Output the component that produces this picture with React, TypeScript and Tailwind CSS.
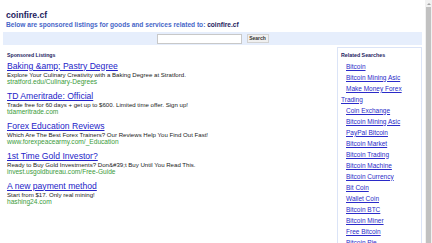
const ads = [
  {
    title: 'Baking &amp; Pastry Degree',
    text: 'Explore Your Culinary Creativity with a Baking Degree at Stratford.',
    url: 'stratford.edu/Culinary-Degrees',
  },
  {
    title: 'TD Ameritrade: Official',
    text: 'Trade free for 60 days + get up to $600. Limited time offer. Sign up!',
    url: 'tdameritrade.com',
  },
  {
    title: 'Forex Education Reviews',
    text: 'Which Are The Best Forex Trainers? Our Reviews Help You Find Out Fast!',
    url: 'www.forexpeacearmy.com/_Education',
  },
  {
    title: '1st Time Gold Investor?',
    text: 'Ready to Buy Gold Investments? Don&#39;t Buy Until You Read This.',
    url: 'invest.usgoldbureau.com/Free-Guide',
  },
  {
    title: 'A new payment method',
    text: 'Start from $17. Only real mining!',
    url: 'hashing24.com',
  },
];

const related = [
  'Bitcoin',
  'Bitcoin Mining Asic',
  'Make Money Forex Trading',
  'Coin Exchange',
  'Bitcoin Mining Asic',
  'PayPal Bitcoin',
  'Bitcoin Market',
  'Bitcoin Trading',
  'Bitcoin Machine',
  'Bitcoin Currency',
  'Bit Coin',
  'Wallet Coin',
  'Bitcoin BTC',
  'Bitcoin Miner',
  'Free Bitcoin',
  'Bitcoin Pie',
];

export default function App() {
  return (
    <div className="flex h-[243px] bg-white font-['Liberation_Sans',Arial,sans-serif]">
      <div className="h-full min-w-0 flex-1 overflow-hidden px-[3px]">
        <div className="pl-[3px] pt-[10px]">
          <h1 className="text-[8.6px] font-bold leading-[11px] text-[#1c1c5e]">coinfire.cf</h1>
          <p className="text-[6.6px] font-bold leading-[8px] text-[#4766c8]">
            Below are sponsored listings for goods and services related to:{' '}
            <span className="text-[#1c1c5e]">coinfire.cf</span>
          </p>
        </div>

        <form className="mt-[3px] flex h-[13px] items-center justify-center gap-[5px] bg-[#e6eefc]">
          <input
            type="text"
            className="h-[10px] w-[85px] border border-[#c8c8c8] bg-white px-[2px] text-[6px] outline-none"
          />
          <button
            type="button"
            className="h-[9px] w-[22px] border border-[#d2d2d2] bg-[#f0f0f0] text-[5px] font-bold leading-[7px] text-[#333]"
          >
            Search
          </button>
        </form>

        <div className="flex items-start">
          <div className="min-w-0 flex-1 pl-[4px] pt-[7px]">
            <h2 className="text-[5.2px] font-bold leading-[6px] text-[#1c1c5e]">Sponsored Listings</h2>
            <div className="mt-[2.5px] flex flex-col">
              {ads.map((ad) => (
                <div key={ad.title} className="mb-[6px]">
                  <a href="#" className="block text-[8.6px] leading-[10px] text-[#2323c8] underline">
                    {ad.title}
                  </a>
                  <p className="text-[6.1px] leading-[7px] text-[#222]">{ad.text}</p>
                  <p className="text-[6.6px] leading-[7px] text-[#3a9b3a]">{ad.url}</p>
                </div>
              ))}
            </div>
          </div>

          <div className="mt-[2px] w-[85px] shrink-0 border border-[#dbe4f7] bg-white pb-[8px] pl-[3px] pr-[2px] pt-[1.5px]">
            <h3 className="text-[5.3px] font-bold leading-[11px] text-[#1c1c5e]">Related Searches</h3>
            <ul>
              {related.map((item, i) => (
                <li key={i} className="indent-[5px] text-[6.5px] leading-[11px]">
                  <a href="#" className="text-[#2a2ac8] underline">
                    {item}
                  </a>
                </li>
              ))}
            </ul>
          </div>
        </div>
      </div>

      <div className="flex w-[7px] shrink-0 flex-col bg-[#f1f1f1]">
        <div className="flex h-[7px] items-center justify-center">
          <div className="h-0 w-0 border-x-[2px] border-b-[2px] border-x-transparent border-b-[#a3a3a3]" />
        </div>
        <div className="mx-[1px] flex-1 bg-[#c1c1c1]" />
      </div>
    </div>
  );
}
